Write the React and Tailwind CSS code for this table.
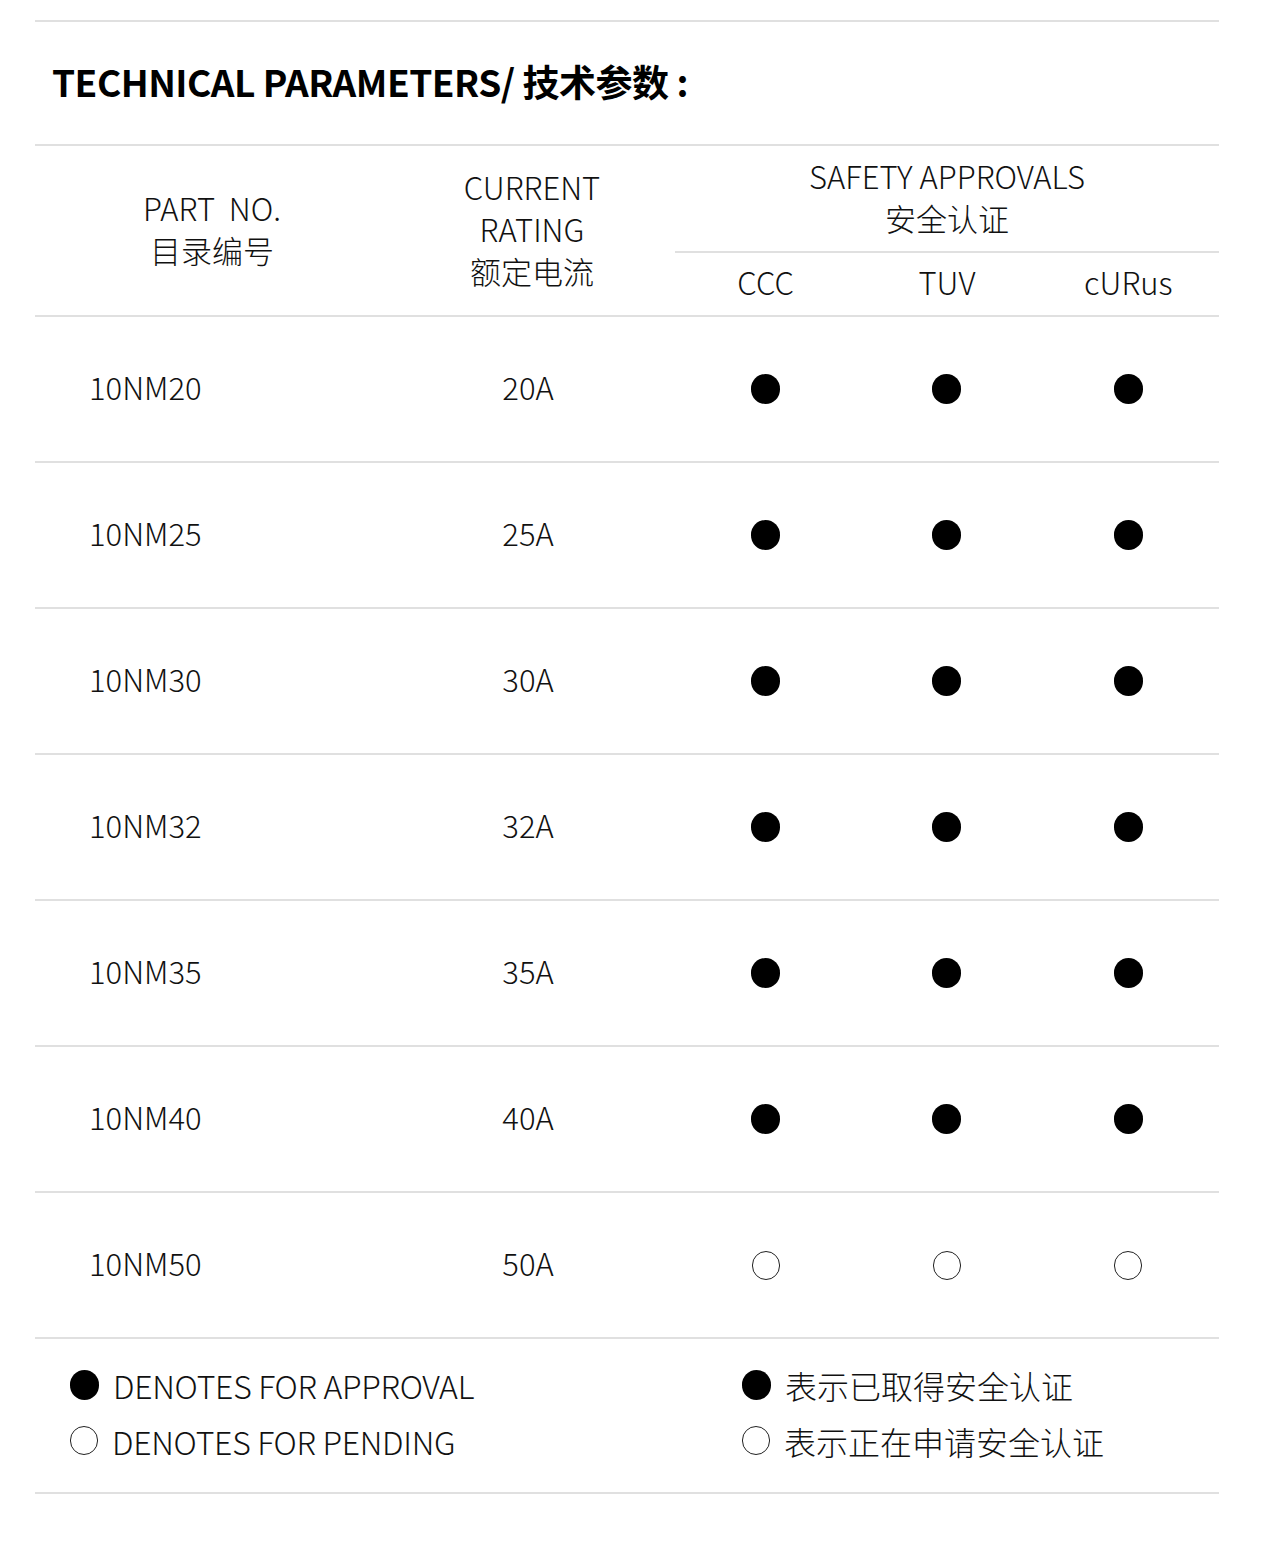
// Technical parameters table

import React from 'react';

const ROWS = [
  { part: '10NM20', rating: '20A', approved: true },
  { part: '10NM25', rating: '25A', approved: true },
  { part: '10NM30', rating: '30A', approved: true },
  { part: '10NM32', rating: '32A', approved: true },
  { part: '10NM35', rating: '35A', approved: true },
  { part: '10NM40', rating: '40A', approved: true },
  { part: '10NM50', rating: '50A', approved: false },
];

const FONT = { fontFamily: '"Noto Sans CJK SC", "Noto Sans", sans-serif' };

function Dot({ filled }) {
  return filled
    ? <span className="block w-[29px] h-[30px] rounded-full bg-black" />
    : <span className="block w-[28px] h-[29px] rounded-full border-[1.5px] border-[#222]" />;
}

export default function App() {
  return (
    <div className="bg-white w-[1278px] min-h-[1560px] pt-[20px]" style={FONT}>
      <div className="mx-[35px] w-[1184px]">
        <div className="border-t-2 border-[#e0e0e0]" />

        {/* Title */}
        <h1 className="h-[122px] flex items-center pl-[17px] pb-[2px] text-[37px] font-bold text-black tracking-[-0.5px]">
          TECHNICAL PARAMETERS/ 技术参数 :
        </h1>

        {/* Header */}
        <div className="border-t-2 border-[#e0e0e0] flex h-[171px] text-[31px] font-light text-[#111] leading-[42px]">
          <div className="w-[354px] flex flex-col items-center justify-center text-center pb-[4px]">
            <div className="whitespace-pre">PART  NO.</div>
            <div>目录编号</div>
          </div>
          <div className="w-[286px] flex flex-col items-center justify-center text-center pb-[4px]">
            <div>CURRENT</div>
            <div>RATING</div>
            <div>额定电流</div>
          </div>
          <div className="flex-1 flex flex-col">
            <div className="h-[105px] flex flex-col items-center justify-center text-center pb-[4px]">
              <div>SAFETY APPROVALS</div>
              <div>安全认证</div>
            </div>
            <div className="flex-1 border-t-2 border-[#e0e0e0] grid grid-cols-3 items-center text-center pb-[4px]">
              <div>CCC</div>
              <div>TUV</div>
              <div>cURus</div>
            </div>
          </div>
        </div>

        {/* Rows */}
        {ROWS.map(r => (
          <div key={r.part} className="border-t-2 border-[#e0e0e0] flex items-center h-[146px] text-[31px] font-light text-[#111]">
            <div className="w-[354px] pl-[54px] pb-[4px]">{r.part}</div>
            <div className="w-[286px] text-center pr-[8px] pb-[4px]">{r.rating}</div>
            <div className="flex-1 grid grid-cols-3 justify-items-center">
              <Dot filled={r.approved} />
              <Dot filled={r.approved} />
              <Dot filled={r.approved} />
            </div>
          </div>
        ))}

        {/* Legend */}
        <div className="border-t-2 border-[#e0e0e0] border-b-2 h-[157px] flex items-center pb-[6px] text-[32px] font-light text-[#111] leading-[56px]">
          <div className="w-[707px] pl-[35px] tracking-[-0.3px]">
            <div className="flex items-center gap-[14px]"><Dot filled /> DENOTES FOR APPROVAL</div>
            <div className="flex items-center gap-[14px]"><Dot filled={false} /> DENOTES FOR PENDING</div>
          </div>
          <div>
            <div className="flex items-center gap-[14px]"><Dot filled /> 表示已取得安全认证</div>
            <div className="flex items-center gap-[14px]"><Dot filled={false} /> 表示正在申请安全认证</div>
          </div>
        </div>
      </div>
    </div>
  );
}
